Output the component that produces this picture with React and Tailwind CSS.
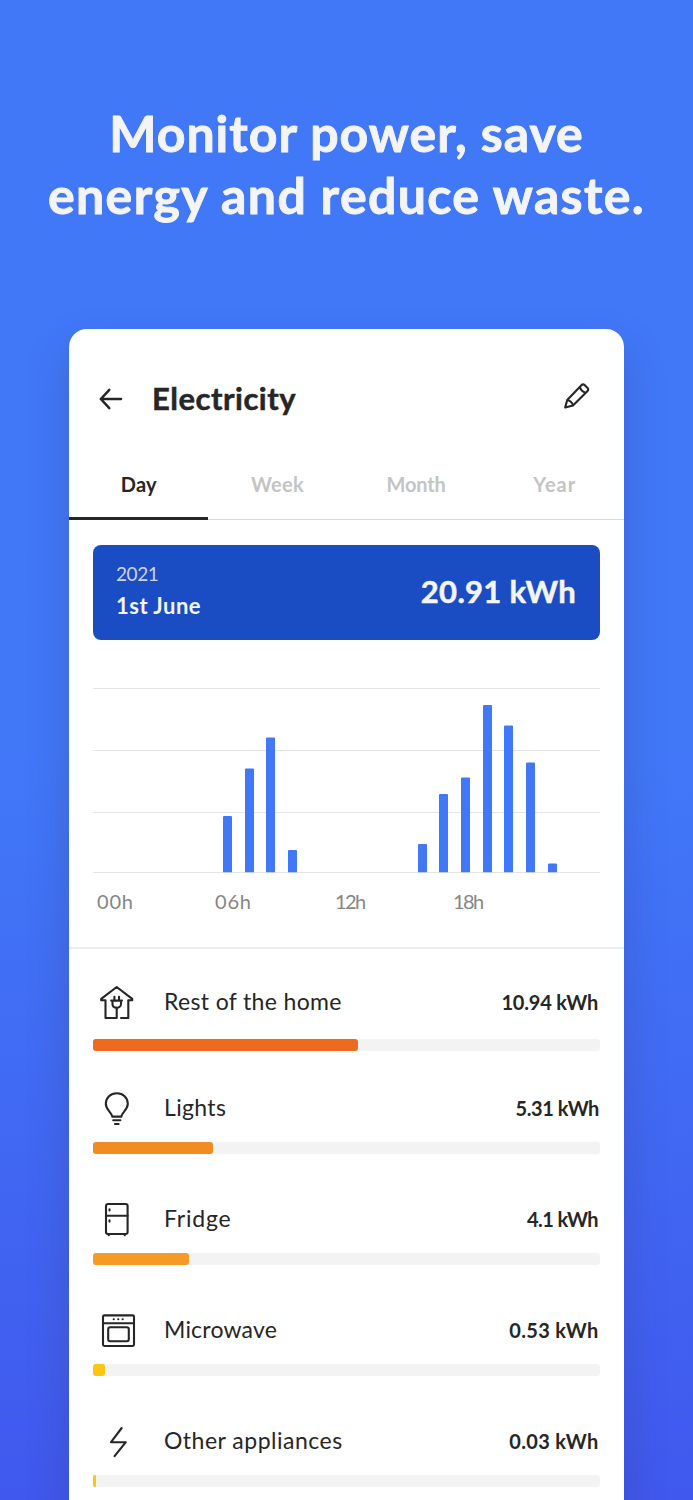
const tabs = [
  { name: "Day", spacing: "tracking-[0.2px]" },
  { name: "Week", spacing: "tracking-[0.3px]" },
  { name: "Month", spacing: "tracking-[-0.2px]" },
  { name: "Year", spacing: "tracking-[1px]" },
];

// x offset and height of every hourly bar, in chart pixels
const bars = [
  [130, 56.5], [152, 104], [173, 135], [195, 22.5],
  [325, 28.5], [346, 78.5], [368, 95], [390, 167.5], [411, 147], [433, 110], [455, 9],
];

const iconProps = {
  width: 40, height: 40, viewBox: "0 0 40 40", fill: "none", stroke: "#262626",
  strokeWidth: 2.1, strokeLinecap: "round", strokeLinejoin: "round",
};

const HomeIcon = () => (
  <svg {...iconProps}>
    <path d="M19.7 36V25.8M19.7 36H8.5V18.2H4.2V16.8L19.7 5L35.2 16.8V18.2H31.3V36H24" />
    <path d="M14.2 18.6H25M15.5 18.6V22C15.5 24.3 17.4 25.7 19.7 25.7S24 24.3 24 22V18.6M17.4 14.7V18.3M22 14.7V18.3" />
  </svg>
);

const BulbIcon = () => (
  <svg {...iconProps}>
    <path d="M15.3 28.6C14.4 23.8 8.8 21.8 8.8 15.8C8.8 9.4 13.6 5.3 19.8 5.3S30.8 9.4 30.8 15.8C30.8 21.8 25.2 23.8 24.3 28.6Z" />
    <path d="M16.2 32.2H23.4M18 36H21.6" />
  </svg>
);

const FridgeIcon = () => (
  <svg {...iconProps}>
    <rect x="9" y="5" width="21.6" height="30" rx="2" />
    <path d="M9 16.8H30.6M12.5 10.2V11.4M12.5 21.2V22.6M11.7 36.2H11.8M27.7 36.2H27.8" />
  </svg>
);

const MicrowaveIcon = () => (
  <svg {...iconProps}>
    <rect x="6" y="5.4" width="31" height="30.6" rx="1.4" />
    <rect x="11.2" y="17.3" width="20.6" height="14" rx="2" />
    <path d="M6 13.3H37M16.7 9.3H16.8M21.2 9.3H21.3M25.6 9.3H25.7" />
  </svg>
);

const BoltIcon = () => (
  <svg {...iconProps}>
    <path d="M24.7 7L14 21.2H28.8L17.6 35.2" />
  </svg>
);

const appliances = [
  { name: "Rest of the home", usage: "10.94 kWh", Icon: HomeIcon, fill: "w-[265px] bg-[#ed6a21]", row: "mb-[37.5px]", gap: "mb-[16.5px]", spacing: "tracking-[0.35px]", usageSpacing: "mr-[2px] tracking-[-0.2px]" },
  { name: "Lights", usage: "5.31 kWh", Icon: BulbIcon, fill: "w-[120px] bg-[#f18c22]", row: "mb-[45px]", gap: "mb-[14px]", spacing: "tracking-[0.35px]", usageSpacing: "mr-[1px] tracking-[-0.4px]" },
  { name: "Fridge", usage: "4.1 kWh", Icon: FridgeIcon, fill: "w-[96px] bg-[#f49a25]", row: "mb-[45px]", gap: "mb-[14px]", spacing: "tracking-[0.8px]", usageSpacing: "mr-[2px] tracking-[-0.6px]" },
  { name: "Microwave", usage: "0.53 kWh", Icon: MicrowaveIcon, fill: "w-[12px] bg-[#fdc50c]", row: "mb-[45px]", gap: "mb-[14px]", spacing: "tracking-[0.2px]", usageSpacing: "mr-[1.5px] tracking-[0.3px]" },
  { name: "Other appliances", usage: "0.03 kWh", Icon: BoltIcon, fill: "w-[2.5px] bg-[#fdc50c]", row: "", gap: "mb-[14px]", spacing: "tracking-[0.5px]", usageSpacing: "mr-[1.5px] tracking-[0.3px]" },
];

const App = () => {
  return (
    <div className="h-[1500px] w-[693px] overflow-hidden bg-linear-to-b from-[#4178f8] from-50% to-[#4058ee] font-['Lato',sans-serif] text-[#262626]">
      <div className="h-[329px] pt-[103px] text-center text-[50px] leading-[61.5px] font-bold text-[#f4f4f4] [-webkit-text-stroke:0.9px_#f4f4f4]">
        <div className="tracking-[1px]">Monitor power, save</div>
        <div className="tracking-[1.35px]">energy and reduce waste.</div>
      </div>

      <div className="ml-[69px] h-[1200px] w-[554.5px] rounded-t-[18px] bg-white shadow-[0_20px_40px_rgba(50,50,100,0.27)]">
        {/* Header */}
        <div className="flex h-[120px] items-start pt-[49px] pl-[30px] pr-[33px]">
          <svg className="mt-[9px]" width="26" height="24" viewBox="0 0 26 24" fill="none" stroke="#262626" strokeWidth="2.5" strokeLinecap="round" strokeLinejoin="round">
            <path d="M22 12H1.8M10.3 2.8L1.8 12L10.3 21.2" />
          </svg>
          <h1 className="ml-[27px] text-[31px] leading-[40px] font-bold tracking-[0.5px] [-webkit-text-stroke:0.5px_#262626]">Electricity</h1>
          <svg className="mt-[4px] ml-auto" width="28" height="28" viewBox="0 0 28 28" fill="none" stroke="#262626" strokeWidth="2.1" strokeLinejoin="round">
            <path d="M2.2 25.6L4.2 18L18.2 3.4Q20 1.6 21.6 3L24.6 5.9Q26 7.5 24.3 9.2L10 23.5ZM4.2 18Q8.6 18.6 10 23.5M16.8 5.2Q18.4 9.6 22.5 10.8" />
          </svg>
        </div>

        {/* Tabs */}
        <div className="flex h-[71px] border-b-[1.5px] border-[#d9d9d9]">
          {tabs.map((tab, i) => (
            <div key={tab.name} className={`h-[71px] w-1/4 pt-[21px] pl-[1px] text-center text-[20px] leading-[28px] font-bold ${tab.spacing} ${i === 0 ? "border-b-3 border-[#262626]" : "text-[#c4c4c4]"}`}>
              {tab.name}
            </div>
          ))}
        </div>

        {/* Total of the day */}
        <div className="mx-[24px] mt-[25px] flex h-[95px] w-[507px] justify-between rounded-[8px] bg-[#1a4dc4] px-[23px]">
          <div className="pt-[16px]">
            <div className="text-[19px] leading-[26px] tracking-[-0.4px] text-[#cdd3e2]">2021</div>
            <div className="mt-[5px] text-[22px] leading-[28px] font-bold tracking-[0.5px] text-[#f4f4f4]">1st June</div>
          </div>
          <div className="pt-[26px] pr-[1px] text-[31px] leading-[40px] font-bold tracking-[0.3px] text-[#f4f4f4] [-webkit-text-stroke:0.5px_#f4f4f4]">20.91 kWh</div>
        </div>

        {/* Chart */}
        <svg className="mt-[40px] ml-[24px] block" width="507" height="193" viewBox="0 0 507 193">
          {[8, 70, 132, 192].map((y) => (
            <rect key={y} x="0" y={y} width="507" height="1" fill="#e4e4e4" />
          ))}
          {bars.map(([x, h]) => (
            <path key={x} d={`M${x} 192.3V${193.5 - h}q0 -1 1 -1h7q1 0 1 1V192.3z`} fill="#4178f8" />
          ))}
        </svg>
        <div className="mt-[14px] ml-[28px] flex h-[60px] text-[20px] leading-[28px] text-[#868686]">
          <span className="w-[118px] tracking-[0.8px]">00h</span>
          <span className="w-[120px] tracking-[0.8px]">06h</span>
          <span className="w-[118px] tracking-[-1.6px]">12h</span>
          <span className="tracking-[-1.6px]">18h</span>
        </div>

        {/* Appliances */}
        <div className="border-t-2 border-[#ededed] px-[24px] pt-[33px]">
          {appliances.map(({ name, usage, Icon, fill, row, gap, spacing, usageSpacing }) => (
            <div key={name} className={`w-[507px] ${row}`}>
              <div className={`flex h-[40px] items-center pl-[4px] ${gap}`}>
                <Icon />
                <span className={`ml-[27px] pb-[1px] text-[23px] ${spacing}`}>{name}</span>
                <span className={`ml-auto text-[20px] font-bold ${usageSpacing}`}>{usage}</span>
              </div>
              <div className="h-[12px] rounded-[3px] bg-[#f3f3f3]">
                <div className={`h-full rounded-[3px] ${fill}`} />
              </div>
            </div>
          ))}
        </div>
      </div>
    </div>
  );
};

export default App;
